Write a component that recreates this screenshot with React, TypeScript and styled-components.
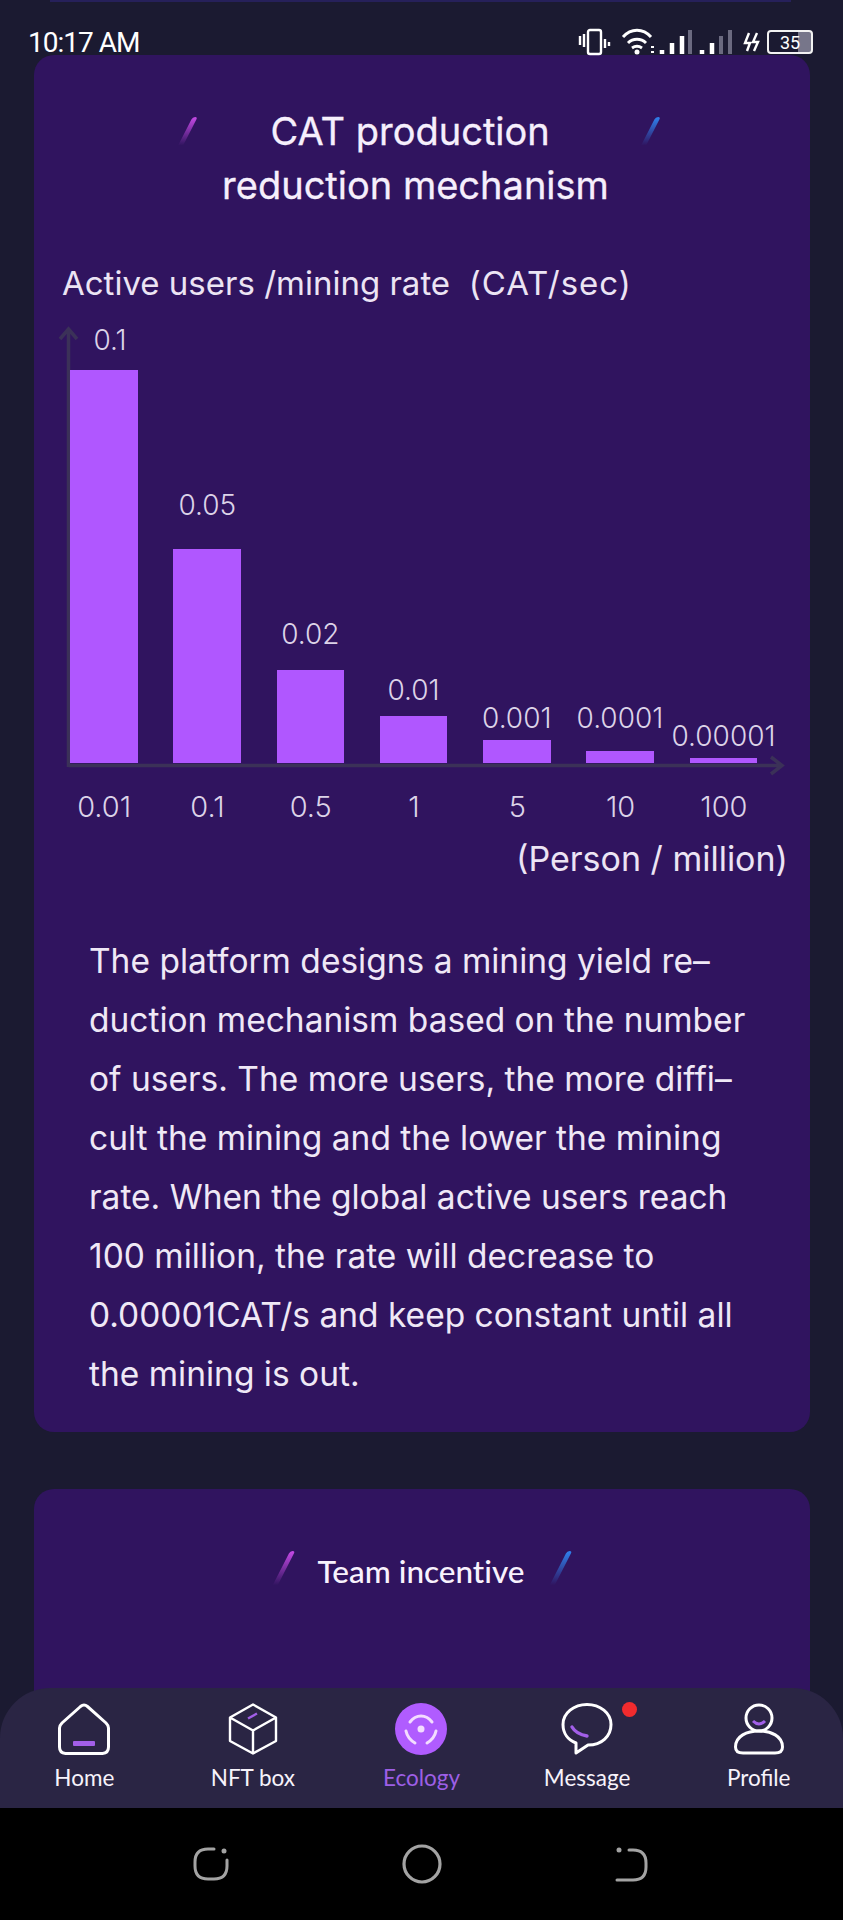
import React from "react";
import styled, { createGlobalStyle } from "styled-components";

const GlobalStyle = createGlobalStyle`
  html, body {
    margin: 0;
    padding: 0;
    background: #1b1a31;
  }
`;

const BODY_FONT = `Inter, "Liberation Sans", sans-serif`;
const HAND_FONT = `Lato, "Noto Sans", sans-serif`;

const Screen = styled.div`
  width: 843px;
  height: 1920px;
  display: flex;
  flex-direction: column;
  overflow: hidden;
  background: #1b1a31;
  font-family: ${BODY_FONT};
`;

const StatusBar = styled.header`
  flex: none;
  height: 55px;
  box-sizing: border-box;
  padding: 27px 30px 0 28px;
  display: flex;
  justify-content: space-between;
  align-items: flex-start;
  color: #fff;
  position: relative;

  &::before {
    content: "";
    position: absolute;
    left: 50px;
    right: 52px;
    top: 0;
    height: 2px;
    background: #26205a;
  }
`;

const Clock = styled.span`
  font-family: Roboto, sans-serif;
  font-size: 28px;
  line-height: 32px;
  letter-spacing: -1px;
`;

const StatusIcons = styled.div`
  display: flex;
  align-items: flex-start;
  gap: 5px;
`;

const Battery = styled.div`
  width: 46px;
  height: 24px;
  margin-top: 3px;
  box-sizing: border-box;
  border: 2px solid #f2f2f2;
  border-radius: 4px;
  display: flex;
  align-items: center;
  justify-content: center;
  font-family: Roboto, sans-serif;
  font-size: 18px;
  background: linear-gradient(90deg, transparent 68%, #77768a 68%);
`;

const Content = styled.main`
  flex: 1;
  min-height: 0;
  overflow: hidden;
  padding: 0 33px 0 34px;
  display: flex;
  flex-direction: column;
  gap: 57px;
`;

const Card = styled.section`
  flex: none;
  background: #30145f;
  border-radius: 20px;
  padding: 49px 0 28px;
  color: #fff;
`;

const TallCard = styled(Card)`
  height: 320px;
  padding-top: 62px;
  box-sizing: border-box;
`;

const Header = styled.div`
  display: flex;
  justify-content: center;
  align-items: flex-start;
  padding-right: 7px;
  gap: 14px;
`;

const TeamHeader = styled(Header)`
  padding-right: 0;
`;

const Slash = styled.i<{ $color: string; $height: number }>`
  flex: none;
  display: block;
  width: 5px;
  height: ${({ $height }) => $height}px;
  margin-top: ${({ $height }) => ($height > 32 ? 0 : 13)}px;
  margin-left: 7px;
  margin-right: 7px;
  transform: skewX(-27deg);
  border-radius: 3px;
  background: linear-gradient(180deg, ${({ $color }) => $color}, transparent 95%);
`;

const Title = styled.h2`
  margin: 0 6px 0 0;
  width: 410px;
  text-align: center;
  font-size: 38px;
  line-height: 54px;
  font-weight: 400;
  -webkit-text-stroke: 0.3px #f6effc;
  color: #f6effc;
`;

const TeamTitle = styled.h2`
  margin: 0 8px 0 6px;
  width: 216px;
  text-align: center;
  font-family: ${HAND_FONT};
  font-size: 31.5px;
  font-variant-ligatures: none;
  line-height: 40px;
  font-weight: 500;
  color: #f8f2fd;
`;

const AxisTitle = styled.div`
  margin: 51px 0 0 28px;
  font-size: 33px;
  line-height: 40px;
  white-space: pre;
  color: #ece4f4;
`;

const AxisUnit = styled.span`
  letter-spacing: 1px;
`;

const Chart = styled.div`
  position: relative;
  margin: 22px 0 0 18.5px;
  width: 723px;
  height: 440px;
  box-sizing: border-box;
  padding-bottom: 2px;
  display: grid;
  grid-template-columns: repeat(7, 1fr);
  align-items: end;
`;

const AxisLines = styled.svg`
  position: absolute;
  left: 0;
  top: 0;
  overflow: visible;
  pointer-events: none;
`;

const Column = styled.div`
  display: flex;
  flex-direction: column;
  align-items: center;
  position: relative;
`;

const ValueLabel = styled.span<{ $gap: number; $shift: number }>`
  font-size: 28px;
  line-height: 30px;
  font-weight: 300;
  color: #dcd3e8;
  white-space: nowrap;
  margin-bottom: ${({ $gap }) => $gap}px;
  margin-left: ${({ $shift }) => $shift}px;
`;

const Bar = styled.div`
  width: 67.5px;
  background: #b057ff;
`;

const Ticks = styled.div`
  margin: 25px 0 0 18.5px;
  width: 723px;
  display: grid;
  grid-template-columns: repeat(7, 1fr);
`;

const Tick = styled.span`
  text-align: center;
  font-size: 29px;
  line-height: 34px;
  font-weight: 300;
  color: #dcd3e8;
`;

const Unit = styled.div`
  margin: 15px 22px 0 0;
  text-align: right;
  font-size: 34px;
  line-height: 40px;
  color: #ece4f4;
`;

const Paragraph = styled.p`
  margin: 53px 0 0 55px;
  font-size: 33.5px;
  line-height: 59px;
  white-space: nowrap;
  color: #efe8f6;
`;

const TabBar = styled.nav`
  flex: none;
  position: relative;
  height: 120px;
  margin-top: -50px;
  box-sizing: border-box;
  padding-top: 15px;
  border-radius: 50px 50px 0 0;
  background: #2a2544;
  display: grid;
  grid-template-columns: repeat(5, 1fr);
`;

const Tab = styled.div<{ $active?: boolean }>`
  position: relative;
  display: flex;
  flex-direction: column;
  align-items: center;
  font-family: ${HAND_FONT};
  font-size: 22.5px;
  line-height: 30px;
  color: ${({ $active }) => ($active ? "#9d5fe6" : "#f7f3fb")};
`;

const MessageTab = styled(Tab)`
  margin-left: -6px;
`;

const TabIcon = styled.svg`
  display: block;
  width: 52px;
  height: 52px;
  margin-bottom: 8px;
`;

const Badge = styled.span`
  position: absolute;
  left: 122px;
  top: -1px;
  width: 15px;
  height: 15px;
  border-radius: 50%;
  background: #f12b2e;
`;

const SystemBar = styled.div`
  flex: none;
  height: 112px;
  box-sizing: border-box;
  padding: 0 195px 0 193px;
  background: #000;
  display: flex;
  align-items: center;
  justify-content: space-between;
`;

const data = [
  { value: "0.1", tick: "0.01", height: 393, gap: 15, shift: 12 },
  { value: "0.05", tick: "0.1", height: 214, gap: 29, shift: 0 },
  { value: "0.02", tick: "0.5", height: 93, gap: 21, shift: 0 },
  { value: "0.01", tick: "1", height: 47, gap: 11, shift: 0 },
  { value: "0.001", tick: "5", height: 23, gap: 7, shift: 0 },
  { value: "0.0001", tick: "10", height: 12, gap: 18, shift: 0 },
  { value: "0.00001", tick: "100", height: 5, gap: 7, shift: 0 },
];

const PURPLE = "#a25fe8";

const StatusGlyphs = () => (
  <svg width="185" height="30" viewBox="0 0 185 30" fill="none">
    {/* vibrate */}
    <rect x="11" y="3" width="13" height="24" rx="2" stroke="#fff" strokeWidth="2.4" />
    <path d="M3 9v9M7 7v13M28 12v9M32 15v4" stroke="#fff" strokeWidth="2.4" />
    {/* wifi */}
    <path d="M46 10C54 1 66 1 74 10M51 16C56 11 64 11 69 16M55 21C58 19 62 19 65 21" stroke="#fff" strokeWidth="3" />
    <circle cx="60" cy="25" r="2.500" fill="#fff" />
    <path d="M74 20h3M74 25h3" stroke="#fff" strokeWidth="2" />
    {/* signal, twice */}
    <path d="M85 23v4M95 16v11M105 9v18" stroke="#fff" strokeWidth="4.500" />
    <path d="M113 3v24" stroke="#6b6a80" strokeWidth="4" />
    <path d="M125 23v4M135 16v11" stroke="#fff" strokeWidth="4.500" />
    <path d="M144 9v18M153 3v24" stroke="#6b6a80" strokeWidth="4" />
    {/* charging */}
    <path d="M172 6l-4 10h5l-3 8M180 6l-4 9h5l-4 9" stroke="#fff" strokeWidth="2.400" />
  </svg>
);

const HomeIcon = () => (
  <TabIcon viewBox="0 0 52 52" fill="none">
    <path
      d="M22.500 3.500Q26 .5 29.500 3.500L48 20Q50.500 22.500 50.500 25V44Q50.500 50 44.500 50.500H7.500Q1.500 50 1.500 44V25Q1.500 22.500 4 20Z"
      stroke="#fff"
      strokeWidth="3"
    />
    <rect x="15" y="38" width="22" height="5" rx="1" fill={PURPLE} />
  </TabIcon>
);

const BoxIcon = () => (
  <TabIcon viewBox="0 0 52 52" fill="none">
    <path
      d="M26 1.500L49 14.500V38L26 50.500 3 38V14.500ZM3 14.500L26 27.500 49 14.500M26 27.500V50.500"
      stroke="#fff"
      strokeWidth="2.400"
      strokeLinejoin="round"
    />
    <path d="M21 15.500L30 10.500" stroke={PURPLE} strokeWidth="2.400" />
  </TabIcon>
);

const EcologyIcon = () => (
  <TabIcon viewBox="0 0 52 52" fill="none">
    <circle cx="26" cy="26" r="26" fill="#b05cff" />
    <circle cx="26" cy="26" r="3.500" fill="#f3dcff" />
    <path
      d="M15 19C21 11 31 11 37 19M11 28C12 33 15 37 20 40M41 28C40 33 37 37 32 40"
      stroke="#f3dcff"
      strokeWidth="3"
      strokeLinecap="round"
    />
  </TabIcon>
);

const MessageIcon = () => (
  <TabIcon viewBox="0 0 52 52" fill="none">
    <path
      d="M15 40L15 50 27 42C41 42 50 33 50 21.500 50 10 39 1.500 26 1.500 13 1.500 2 10 2 21.500 2 30 7 37 15 40Z"
      stroke="#fff"
      strokeWidth="3"
      strokeLinejoin="round"
    />
    <path d="M11 24Q15 31 26 33" stroke={PURPLE} strokeWidth="3.400" strokeLinecap="round" />
  </TabIcon>
);

const ProfileIcon = () => (
  <TabIcon viewBox="0 0 52 52" fill="none">
    <circle cx="26" cy="15" r="13" stroke="#fff" strokeWidth="3" />
    <path d="M20 18Q26 24 32 18" stroke={PURPLE} strokeWidth="3" />
    <path
      d="M2.500 44C2.500 33 14 28 26 28S49.500 33 49.500 44Q49.500 50 42 50H10Q2.500 50 2.500 44Z"
      stroke="#fff"
      strokeWidth="3"
    />
  </TabIcon>
);

const App = () => (
  <Screen>
    <GlobalStyle />
    <StatusBar>
      <Clock>10:17 AM</Clock>
      <StatusIcons>
        <StatusGlyphs />
        <Battery>35</Battery>
      </StatusIcons>
    </StatusBar>

    <Content>
      <Card>
        <Header>
          <Slash $color="#c64ae6" $height={30} />
          <Title>
            CAT production&nbsp;
            <br />
            reduction mechanism
          </Title>
          <Slash $color="#2f82ee" $height={30} />
        </Header>
        <AxisTitle>
          {"Active users /mining rate  "}
          <AxisUnit>(CAT/sec)</AxisUnit>
        </AxisTitle>
        <Chart>
          <AxisLines width="740" height="445" fill="none">
            <path d="M15.500 442V4M7 14L15.500 4 24 14" stroke="#3b3158" strokeWidth="3.500" />
            <path d="M15.500 440.500H728M718 432L729 440.500 718 449" stroke="#3b3158" strokeWidth="3.500" />
          </AxisLines>
          {data.map((d) => (
            <Column key={d.tick}>
              <ValueLabel $gap={d.gap} $shift={d.shift}>
                {d.value}
              </ValueLabel>
              <Bar style={{ height: d.height }} />
            </Column>
          ))}
        </Chart>
        <Ticks>
          {data.map((d) => (
            <Tick key={d.tick}>{d.tick}</Tick>
          ))}
        </Ticks>
        <Unit>(Person / million)</Unit>
        <Paragraph>
          The platform designs a mining yield re–
          <br />
          duction mechanism based on the number
          <br />
          of users. The more users, the more diffi–
          <br />
          cult the mining and the lower the mining
          <br />
          rate. When the global active users reach
          <br />
          100 million, the rate will decrease to
          <br />
          0.00001CAT/s and keep constant until all
          <br />
          the mining is out.
        </Paragraph>
      </Card>

      <TallCard>
        <TeamHeader>
          <Slash $color="#c64ae6" $height={36} />
          <TeamTitle>Team incentive</TeamTitle>
          <Slash $color="#2f82ee" $height={36} />
        </TeamHeader>
      </TallCard>
    </Content>

    <TabBar>
      <Tab>
        <HomeIcon />
        Home
      </Tab>
      <Tab>
        <BoxIcon />
        NFT box
      </Tab>
      <Tab $active>
        <EcologyIcon />
        Ecology
      </Tab>
      <MessageTab>
        <MessageIcon />
        Message
        <Badge />
      </MessageTab>
      <Tab>
        <ProfileIcon />
        Profile
      </Tab>
    </TabBar>

    <SystemBar>
      <svg width="36" height="34" viewBox="0 0 36 34" fill="none" stroke="#a3a3a3" strokeWidth="3" strokeLinecap="round">
        <path d="M21 2H15Q2 2 2 15V19Q2 32 15 32H21Q34 32 34 19V13" />
        <circle cx="31" cy="4" r="2.500" fill="#a3a3a3" stroke="none" />
      </svg>
      <svg width="40" height="40" viewBox="0 0 40 40" fill="none">
        <circle cx="20" cy="20" r="18" stroke="#a3a3a3" strokeWidth="3.200" />
      </svg>
      <svg width="33" height="35" viewBox="0 0 33 35" fill="none" stroke="#a3a3a3" strokeWidth="3" strokeLinecap="round">
        <path d="M14 3H18Q31 3 31 16V20Q31 33 18 33H2" />
        <circle cx="4" cy="3" r="2.500" fill="#a3a3a3" stroke="none" />
      </svg>
    </SystemBar>
  </Screen>
);

export default App;
